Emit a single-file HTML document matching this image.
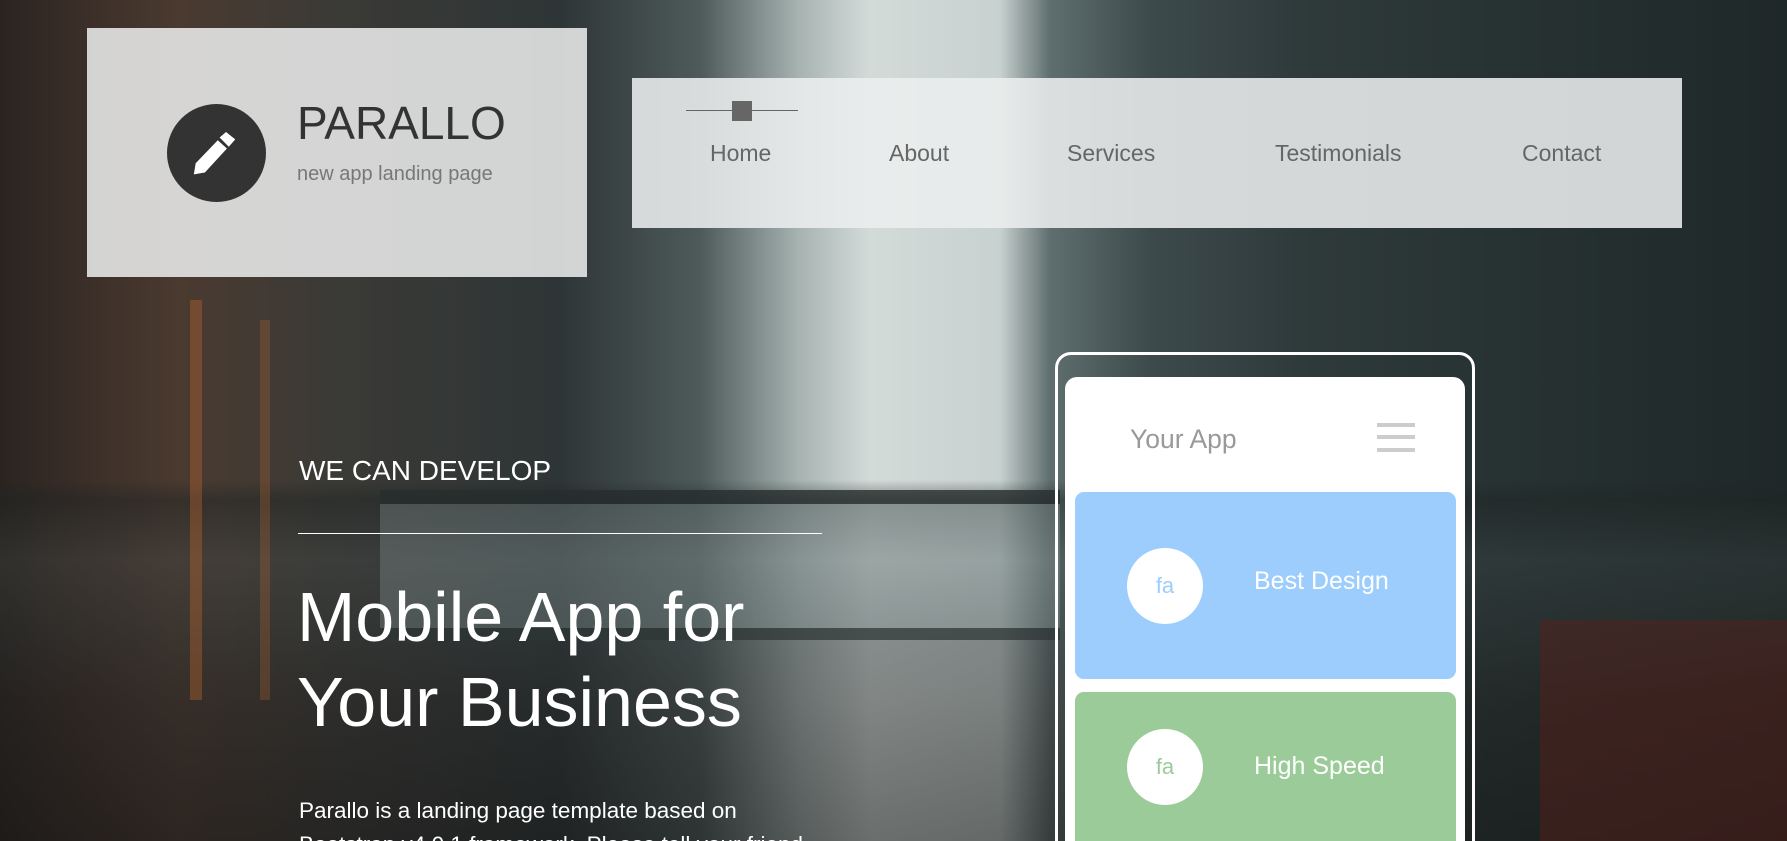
<!DOCTYPE html>
<html><head><meta charset="utf-8"><style>
*{margin:0;padding:0;box-sizing:border-box}
html,body{width:1787px;height:841px;overflow:hidden;font-family:"Liberation Sans",Arial,sans-serif}
#w{position:relative;width:1787px;height:841px;overflow:hidden}
.bg{position:absolute;inset:0;background:
linear-gradient(180deg,rgba(0,0,0,0) 0,rgba(0,0,0,0) 480px,rgba(30,35,35,.45) 500px,rgba(60,68,68,.35) 560px,rgba(40,45,45,.45) 640px,rgba(30,30,30,.45) 700px,rgba(20,20,20,.55) 841px),
linear-gradient(90deg,#2a2420 0,#3a2e28 80px,#4a3a30 180px,#3b3a36 330px,#2e3536 560px,#4e5a5a 700px,#a8b4b2 800px,#d3dbd9 870px,#c7d1cf 1000px,#5f6e6e 1050px,#3d4a4b 1150px,#2f3a3b 1300px,#273232 1500px,#1f2828 1787px);}
.box{position:absolute;background:rgba(233,235,235,.88)}
</style></head><body><div id="w">
<div class="bg"></div>
<div style="position:absolute;left:190px;top:300px;width:12px;height:400px;background:rgba(200,110,50,.35)"></div>
<div style="position:absolute;left:260px;top:320px;width:10px;height:380px;background:rgba(200,110,50,.25)"></div>
<div style="position:absolute;left:380px;top:490px;width:680px;height:150px;border-top:14px solid rgba(25,30,30,.7);border-bottom:12px solid rgba(25,30,30,.6);background:rgba(150,165,165,.3)"></div>
<div style="position:absolute;left:1540px;top:620px;width:247px;height:221px;background:rgba(90,30,25,.45)"></div>

<div class="box" style="left:87px;top:28px;width:500px;height:249px"></div>
<div style="position:absolute;left:167px;top:104px;width:99px;height:98px;border-radius:50%;background:#333"></div>
<svg style="position:absolute;left:193px;top:128px" width="50" height="50" viewBox="0 0 50 50"><path d="M30 6 L37 0 L47 8 L40 16 Z M28 9 L38 18 L14 44 L2 46 L4 34 Z" fill="#fff" transform="translate(-1,4) scale(0.92)"/></svg>
<div style="position:absolute;left:297px;top:96px;font-size:46px;color:#333">PARALLO</div>
<div style="position:absolute;left:297px;top:163px;font-size:20px;color:#777">new app landing page</div>

<div class="box" style="left:632px;top:78px;width:1050px;height:150px;background:rgba(236,238,238,.88)"></div>
<div style="position:absolute;left:686px;top:110px;width:112px;height:1px;background:#666"></div>
<div style="position:absolute;left:732px;top:101px;width:20px;height:20px;background:#666"></div>
<div style="position:absolute;top:140px;font-size:23px;color:#666;left:0;width:1787px">
<span style="position:absolute;left:710px">Home</span><span style="position:absolute;left:889px">About</span><span style="position:absolute;left:1067px">Services</span><span style="position:absolute;left:1275px">Testimonials</span><span style="position:absolute;left:1522px">Contact</span></div>

<div style="position:absolute;left:299px;top:455px;font-size:28px;color:#fff">WE CAN DEVELOP</div>
<div style="position:absolute;left:298px;top:533px;width:524px;height:1px;background:#fff"></div>
<div style="position:absolute;left:297px;top:575px;font-size:70px;line-height:85px;color:#fff">Mobile App for<br>Your Business</div>
<div style="position:absolute;left:299px;top:794px;font-size:22.5px;line-height:34px;color:#fff">Parallo is a landing page template based on<br>Bootstrap v4.0.1 framework. Please tell your friend</div>

<div style="position:absolute;left:1055px;top:352px;width:420px;height:520px;border:3px solid #fff;border-radius:16px"></div>
<div style="position:absolute;left:1065px;top:377px;width:400px;height:480px;background:#fff;border-radius:12px"></div>
<div style="position:absolute;left:1130px;top:424px;font-size:26.5px;color:#999">Your App</div>
<div style="position:absolute;left:1377px;top:423px;width:38px;height:4px;background:#ccc;box-shadow:0 12px 0 #ccc,0 25px 0 #ccc"></div>
<div style="position:absolute;left:1075px;top:492px;width:381px;height:187px;background:#9ccdfd;border-radius:9px"></div>
<div style="position:absolute;left:1127px;top:548px;width:76px;height:76px;border-radius:50%;background:#fff;color:#9ccdfd;font-size:22px;text-align:center;line-height:76px">fa</div>
<div style="position:absolute;left:1254px;top:567px;font-size:25px;color:#fff">Best Design</div>
<div style="position:absolute;left:1075px;top:692px;width:381px;height:187px;background:#9bcb98;border-radius:9px"></div>
<div style="position:absolute;left:1127px;top:729px;width:76px;height:76px;border-radius:50%;background:#fff;color:#9bcb98;font-size:22px;text-align:center;line-height:76px">fa</div>
<div style="position:absolute;left:1254px;top:752px;font-size:25px;color:#fff">High Speed</div>
</div></body></html>
